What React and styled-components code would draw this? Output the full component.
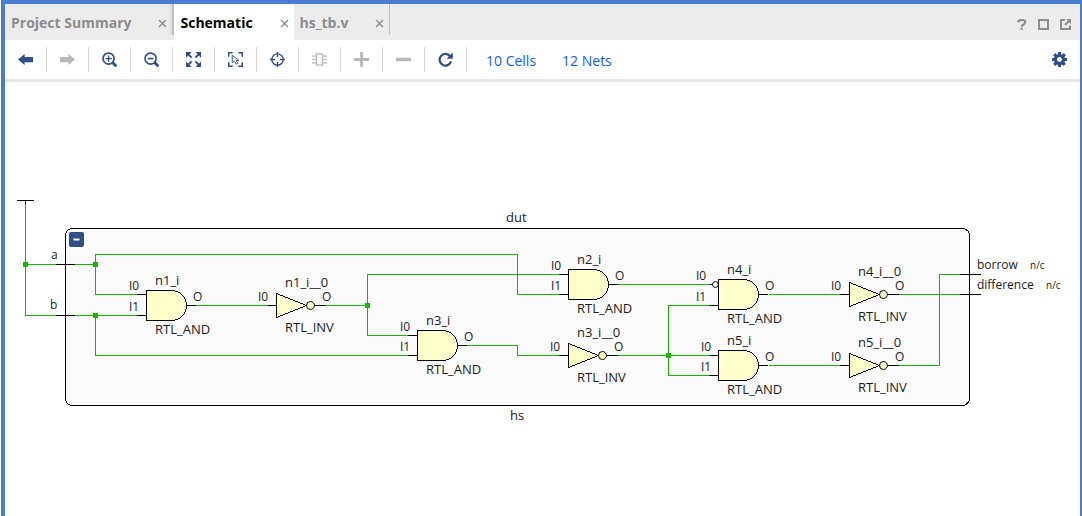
import React from "react";
import styled, { createGlobalStyle } from "styled-components";

const color = {
  frame: "#4a7dd2",
  bar: "#ececec",
  rule: "#e6e6e6",
  navy: "#2f4f86",
  muted: "#b8b8b8",
  grey: "#8c8c8c",
  link: "#0f5cf5",
  wire: "#18b400",
  cell: "#ffffcc",
  block: "#fafafa",
};

const GlobalStyle = createGlobalStyle`
  * { box-sizing: border-box; }
  body {
    margin: 0;
    background: #fff;
    font-family: "Open Sans", "Noto Sans", sans-serif;
  }
`;

const Window = styled.div`
  display: flex;
  flex-direction: column;
  min-height: 100vh;
  margin-left: 1px;
  border: solid ${color.frame};
  border-width: 4px 2px 0 4px;
  background: #fff;
`;

const TabBar = styled.header`
  display: flex;
  height: 36px;
  background: ${color.bar};
`;

const TabList = styled.div`
  display: flex;
  flex: 1;
`;

const Tab = styled.div`
  display: flex;
  align-items: center;
  gap: 27px;
  padding: 2px 5px 0 6px;
  background: ${(p) => (p.$active ? "#fff" : "transparent")};
  color: ${(p) => (p.$active ? "#000" : color.grey)};
`;

const TabLabel = styled.button`
  border: 0;
  padding: 0;
  background: none;
  color: inherit;
  font: 700 14px/20px "Open Sans", "Noto Sans", sans-serif;
  white-space: nowrap;
`;

const TabDivider = styled.span`
  width: ${(p) => (p.$wide ? 4 : 1)}px;
  height: 31px;
  margin-left: ${(p) => (p.$wide ? -2 : 0)}px;
  border-right: ${(p) => (p.$wide ? 2 : 1)}px solid #c0c0c0;
  background: #dcdcdc;
`;

const IconButton = styled.button`
  display: flex;
  align-items: center;
  justify-content: center;
  border: 0;
  padding: 0;
  background: none;
  color: ${(p) => p.$color || color.grey};
`;

const WindowActions = styled.div`
  display: flex;
  align-items: center;
  gap: 11px;
  padding: 5px 9px 0 0;
`;

const Toolbar = styled.nav`
  display: flex;
  align-items: center;
  height: 42px;
  border-bottom: 3px solid ${color.rule};
`;

const Tool = styled(IconButton)`
  width: 42px;
  height: 25px;
  border-right: 1px solid #d6d6d6;
  color: ${(p) => (p.disabled ? color.muted : color.navy)};
`;

const Links = styled.div`
  display: flex;
  flex: 1;
  gap: 26px;
  padding: 2px 0 0 19px;
`;

const CountLink = styled.a`
  color: ${color.link};
  font: 400 14px/20px "Open Sans", "Noto Sans", sans-serif;
  text-decoration: none;
  white-space: nowrap;
`;

const Settings = styled(IconButton)`
  width: 15px;
  height: 15px;
  margin-right: 13px;
`;

const Canvas = styled.main`
  position: relative;
  flex: 1;
  overflow: hidden;
`;

const Drawing = styled.svg`
  display: block;
`;

const Collapse = styled.button`
  position: absolute;
  left: 64px;
  top: 150px;
  display: flex;
  align-items: center;
  justify-content: center;
  width: 15px;
  height: 15px;
  border: 0;
  border-radius: 2px;
  padding: 0;
  background: ${color.navy};
  color: #fff;
`;

const Outline = styled.g`
  fill: none;
  stroke: #000;
  stroke-linecap: square;
  shape-rendering: crispEdges;
`;

const Bubble = styled.circle`
  shape-rendering: geometricPrecision;
`;

const Wires = styled.path`
  fill: none;
  stroke: ${color.wire};
  stroke-linecap: square;
  shape-rendering: crispEdges;
`;

const Junction = styled.rect`
  fill: ${color.wire};
`;

const Label = styled.text`
  fill: #1a1a1a;
  font-size: ${(p) => p.$size || 13}px;
`;

const Icon = ({ size = 15, view = size, children }) => (
  <svg width={size} height={size} viewBox={`0 0 ${view} ${view}`} fill="none" stroke="currentColor" aria-hidden="true">
    {children}
  </svg>
);

const CloseIcon = () => (
  <Icon size={9}>
    <path d="M1 1l7 7M8 1l-7 7" stroke="#8c8c8c" strokeWidth="1.4" />
  </Icon>
);

const icons = {
  back: <path d="M0 8L7 2.2V5.2H16V10.8H7V13.8Z" fill="currentColor" stroke="none" />,
  forward: <path d="M16 8L9 2.2V5.2H0V10.8H9V13.8Z" fill="currentColor" stroke="none" />,
  zoomIn: (
    <>
      <circle cx="7" cy="7" r="5.9" strokeWidth="1.8" />
      <path d="M3.6 7h6.8M7 3.6v6.8" strokeWidth="1.4" />
      <path d="M11.3 11.3l4 4" strokeWidth="3" />
    </>
  ),
  zoomOut: (
    <>
      <circle cx="7" cy="7" r="5.9" strokeWidth="1.8" />
      <path d="M4 7h6" strokeWidth="1.8" />
      <path d="M11.3 11.3l4 4" strokeWidth="3" />
    </>
  ),
  fit: (
    <>
      <path d="M0 0H6L0 6ZM16 0V6L10 0ZM0 16V10L6 16ZM16 16H10L16 10Z" fill="currentColor" stroke="none" />
      <path d="M2 2l4 4M14 2l-4 4M2 14l4-4M14 14l-4-4" strokeWidth="2" />
    </>
  ),
  select: (
    <>
      <path d="M0.8 5V0.8H5M11 0.8H15.2V5M15.2 11V15.2H11M5 15.2H0.8V11" strokeWidth="1.6" />
      <path d="M4.5 3.5V11.5L6.7 9.8L8.6 13L10.4 12L8.7 9H11.5Z" strokeWidth="1" />
    </>
  ),
  target: (
    <>
      <circle cx="8" cy="8" r="6.1" strokeWidth="1.4" />
      <path d="M8 0V5.4M8 10.6V16M0 8H5.4M10.6 8H16" strokeWidth="1.4" />
    </>
  ),
  cell: (
    <>
      <path d="M4.8 2H11.2V14H4.8Z" strokeWidth="1.4" />
      <path d="M0 4.3H4.8M0 8H4.8M0 11.7H4.8M11.2 4.3H16M11.2 8H16M11.2 11.7H16" strokeWidth="1.3" />
    </>
  ),
  plus: <path d="M8 0V16M0 8H16" strokeWidth="3" />,
  minus: <path d="M0 8H16" strokeWidth="3.8" />,
  reload: (
    <>
      <path d="M12.6 4.2A6.2 6.2 0 1 0 13.9 10" strokeWidth="2.4" />
      <path d="M15.8 0.6V7.2H9.2Z" fill="currentColor" stroke="none" />
    </>
  ),
};

const tools = [
  ["Previous", "back"],
  ["Next", "forward", true],
  ["Zoom in", "zoomIn"],
  ["Zoom out", "zoomOut"],
  ["Zoom fit", "fit"],
  ["Select area", "select"],
  ["Autofit selection", "target"],
  ["Expand cell", "cell", true],
  ["Add", "plus", true],
  ["Remove", "minus", true],
  ["Regenerate", "reload"],
];

const Gear = () => (
  <Icon view={16}>
    {[0, 45, 90, 135].map((a) => (
      <path key={a} d="M8 0V16" strokeWidth="3.4" transform={`rotate(${a} 8 8)`} />
    ))}
    <circle cx="8" cy="8" r="6" fill="currentColor" stroke="none" />
    <circle cx="8" cy="8" r="2.6" fill="#fff" stroke="none" />
  </Icon>
);

const wirePath = [
  "M25 204V315H56M25 264H56M75 264H95V254H517V294H559M95 264V294H137",
  "M75 315H137M95 315V355H408",
  "M196 305H267M326 305H367V274H559M367 305V335H408",
  "M467 345H517V355H559M618 355H709M668 355V305H709M668 355V375H709",
  "M618 284H709M769 294H840M769 365H840M899 294H960M899 365H939V274H960",
].join("");

const junctions = [[25, 264], [95, 264], [95, 315], [367, 305], [668, 355]];

const andGates = [
  { name: "n1_i", x: 146, y: 290, pins: [294, 315], out: 305, labelX: 129 },
  { name: "n3_i", x: 417, y: 330, pins: [335, 355], out: 345, labelX: 400 },
  { name: "n2_i", x: 568, y: 269, pins: [274, 294], out: 284, labelX: 551 },
  { name: "n4_i", x: 718, y: 279, pins: [284, 305], out: 294, labelX: 696, inverted: true },
  { name: "n5_i", x: 718, y: 350, pins: [355, 375], out: 365, labelX: 701 },
];

const inverters = [
  { name: "n1_i__0", x: 276, y: 305 },
  { name: "n3_i__0", x: 568, y: 355 },
  { name: "n4_i__0", x: 849, y: 294 },
  { name: "n5_i__0", x: 849, y: 365 },
];

const AndGate = ({ name, x, y, pins, out, labelX, inverted }) => (
  <g>
    <Outline transform="translate(.5 .5)">
      <path d={`M${x - 9} ${pins[0]}h${inverted ? 3 : 9}M${x - 9} ${pins[1]}h9M${x + 41} ${out}h8`} />
      {inverted && <Bubble cx={x - 3} cy={pins[0]} r="3" fill="#fff" />}
      <path d={`M${x} ${y}h25a15 15 0 0 1 0 30h-25z`} fill={color.cell} />
    </Outline>
    <Label x={x + 9} y={y - 5}>{name}</Label>
    <Label x={x + 9} y={y + 44}>RTL_AND</Label>
    <Label $size={12} x={labelX} y={pins[0] - 4}>I0</Label>
    <Label $size={12} x={labelX} y={pins[1] - 4}>I1</Label>
    <Label $size={12} x={x + 47} y={out - 4}>O</Label>
  </g>
);

const Inverter = ({ name, x, y }) => (
  <g>
    <Outline transform="translate(.5 .5)">
      <path d={`M${x} ${y - 12}L${x + 30} ${y}L${x} ${y + 12}z`} fill={color.cell} />
      <path d={`M${x - 9} ${y}h9M${x + 38} ${y}h11`} />
      <Bubble cx={x + 34} cy={y} r="4" fill={color.cell} />
    </Outline>
    <Label x={x + 9} y={y - 18}>{name}</Label>
    <Label x={x + 9} y={y + 27}>RTL_INV</Label>
    <Label $size={12} x={x - 18} y={y - 4}>I0</Label>
    <Label $size={12} x={x + 46} y={y - 4}>O</Label>
  </g>
);

const Schematic = () => (
  <Drawing width="1075" height="434" viewBox="5 82 1075 434" role="img" aria-label="Schematic of dut">
    <Outline transform="translate(.5 .5)">
      <rect x="65" y="228" width="904" height="177" rx="7" fill={color.block} />
    </Outline>
    <Wires transform="translate(.5 .5)" d={wirePath} />
    <Outline transform="translate(.5 .5)">
      <path d="M17 200H33M25 200V203M56 264H74M56 315H74M960 274H980M960 294H980" />
    </Outline>
    {junctions.map(([x, y]) => (
      <Junction key={`${x}-${y}`} x={x - 2} y={y - 2} width="5" height="5" />
    ))}
    {andGates.map((g) => <AndGate key={g.name} {...g} />)}
    {inverters.map((g) => <Inverter key={g.name} {...g} />)}
    <Label x="506" y="222">dut</Label>
    <Label x="510" y="420">hs</Label>
    <Label $size={12} x="51" y="259">a</Label>
    <Label $size={12} x="50" y="309">b</Label>
    <Label $size={12} x="977" y="269">borrow</Label>
    <Label $size={12} x="977" y="289">difference</Label>
    <Label $size={10} x="1030" y="269">n/c</Label>
    <Label $size={10} x="1046" y="289">n/c</Label>
  </Drawing>
);

const DocumentTab = ({ title, active }) => (
  <Tab $active={active}>
    <TabLabel>{title}</TabLabel>
    <IconButton aria-label={`Close ${title}`}><CloseIcon /></IconButton>
  </Tab>
);

export default function App() {
  return (
    <Window>
      <GlobalStyle />
      <TabBar>
        <TabList>
          <DocumentTab title="Project Summary" />
          <TabDivider $wide />
          <DocumentTab title="Schematic" active />
          <DocumentTab title="hs_tb.v" />
          <TabDivider />
        </TabList>
        <WindowActions>
          <IconButton aria-label="Help">
            <Icon size={11}>
              <path d="M2 3.4C2.4 0 9.3 0.2 9.3 3.2C9.3 5.4 5.6 5.2 5.6 7.8M5.6 8.8V11" strokeWidth="2" />
            </Icon>
          </IconButton>
          <IconButton aria-label="Maximize">
            <Icon size={11}><path d="M1 1H10V10H1Z" strokeWidth="2" /></Icon>
          </IconButton>
          <IconButton aria-label="Float">
            <Icon size={11}>
              <path d="M5 1H1V10H10V6.5" strokeWidth="2" />
              <path d="M5 6L9 2" strokeWidth="2" />
              <path d="M6 0H11V5Z" fill="currentColor" stroke="none" />
            </Icon>
          </IconButton>
        </WindowActions>
      </TabBar>
      <Toolbar>
        {tools.map(([label, icon, off]) => (
          <Tool key={icon} aria-label={label} disabled={off}>
            <Icon view={16}>{icons[icon]}</Icon>
          </Tool>
        ))}
        <Links>
          <CountLink href="#cells">10 Cells</CountLink>
          <CountLink href="#nets">12 Nets</CountLink>
        </Links>
        <Settings aria-label="Settings" $color={color.navy}><Gear /></Settings>
      </Toolbar>
      <Canvas>
        <Schematic />
        <Collapse aria-label="Collapse dut">
          <Icon size={7}><path d="M0.5 3.5H6.5" strokeWidth="2" /></Icon>
        </Collapse>
      </Canvas>
    </Window>
  );
}
